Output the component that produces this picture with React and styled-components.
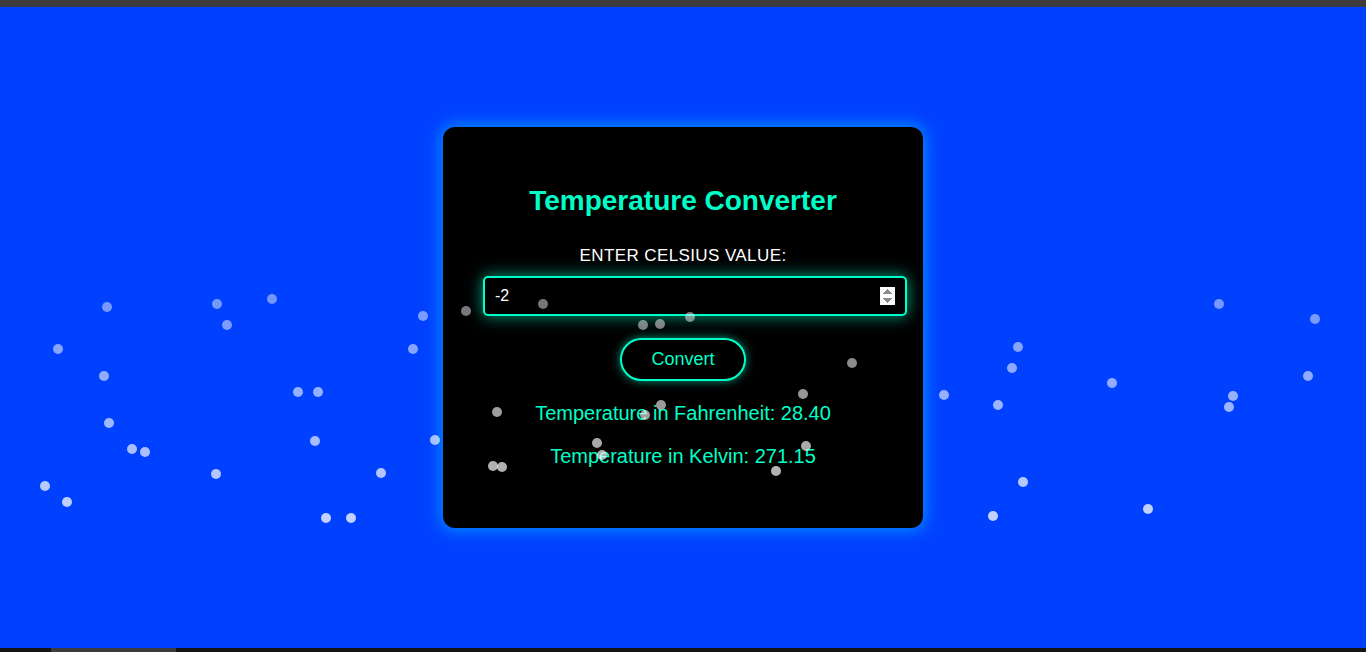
import React, { useState } from "react";
import styled, { createGlobalStyle } from "styled-components";

const GlobalStyle = createGlobalStyle`
  html, body, #root {
    height: 100%;
  }
  body {
    margin: 0;
    overflow: hidden;
    font-family: "Liberation Sans", Arial, sans-serif;
  }
  * { box-sizing: content-box; }
`;

const TEAL = "#00ffc8";

// particle centres, page coordinates
const dots = [
  [107, 307], [217, 304], [272, 299], [227, 325], [58, 349], [104, 376],
  [109, 423], [132, 449], [145, 452], [216, 474], [45, 486], [67, 502],
  [298, 392], [318, 392], [315, 441], [381, 473], [326, 518], [351, 518],
  [423, 316], [413, 349], [435, 440], [466, 311],
  [543, 304], [643, 325], [660, 324], [690, 317], [852, 363], [803, 394],
  [497, 412], [661, 405], [645, 415], [597, 443], [602, 455], [493, 466],
  [502, 467], [776, 471], [806, 446],
  [944, 395], [1018, 347], [1012, 368], [998, 405], [1023, 482], [993, 516],
  [1112, 383], [1148, 509], [1219, 304], [1233, 396], [1229, 407],
  [1315, 319], [1308, 376],
];

function Converter() {
  const [celsius, setCelsius] = useState("-2");
  const [result, setResult] = useState({ f: "28.40", k: "271.15" });

  const convert = () => {
    const c = parseFloat(celsius);
    if (isNaN(c)) return;
    setResult({ f: (c * 9 / 5 + 32).toFixed(2), k: (c + 273.15).toFixed(2) });
  };

  return (
    <Page>
      <GlobalStyle />
      <TopBar />
      <Stage>
        <Card>
          <Title>Temperature Converter</Title>
          <Label htmlFor="celsius">Enter Celsius Value:</Label>
          <Input
            id="celsius"
            type="number"
            value={celsius}
            onChange={(e) => setCelsius(e.target.value)}
          />
          <Button onClick={convert}>Convert</Button>
          <Result>Temperature in Fahrenheit: {result.f}</Result>
          <Result>Temperature in Kelvin: {result.k}</Result>
        </Card>
        <Particles>
          {dots.map(([x, y], i) => (
            <Dot
              key={i}
              style={{
                left: x - 5,
                top: y - 7 - 5,
                opacity: Math.min(0.78, 0.45 + (y - 295) * 0.0014),
              }}
            />
          ))}
        </Particles>
      </Stage>
      <BottomBar>
        <Thumb />
      </BottomBar>
    </Page>
  );
}

const Page = styled.div`
  height: 100vh;
  display: flex;
  flex-direction: column;
`;

const TopBar = styled.div`
  height: 7px;
  background: #3c3c3c;
`;

const Stage = styled.main`
  position: relative;
  flex: 1;
  background: #0041ff;
  display: flex;
  align-items: center;
  justify-content: center;
  overflow: hidden;
`;

const BottomBar = styled.div`
  height: 4px;
  background: #141414;
  padding-left: 51px;
`;

const Thumb = styled.div`
  width: 125px;
  height: 100%;
  background: #3c3c3c;
`;

const Card = styled.div`
  width: 400px;
  padding: 40px;
  background: #000;
  border-radius: 12px;
  box-shadow: 0 0 16px 2px rgba(0, 160, 255, 0.85);
  text-align: center;
`;

const Title = styled.h1`
  margin: 18px 0 29px;
  font-size: 28px;
  font-weight: 700;
  color: ${TEAL};
`;

const Label = styled.label`
  display: block;
  margin-bottom: 10px;
  font-size: 17px;
  color: #fff;
  text-transform: uppercase;
  letter-spacing: 0.4px;
`;

const Input = styled.input`
  display: block;
  width: 100%;
  padding: 9px 10px;
  font-family: "Liberation Sans", Arial, sans-serif;
  font-size: 16px;
  color: #fff;
  background: #000;
  border: 2px solid ${TEAL};
  border-radius: 5px;
  outline: none;
  box-shadow: 0 0 16px rgba(0, 255, 200, 0.65);

  &::-webkit-inner-spin-button {
    opacity: 1;
  }
`;

const Button = styled.button`
  margin: 22px 0 1px;
  padding: 9px 29px;
  font-family: "Liberation Sans", Arial, sans-serif;
  font-size: 18px;
  color: ${TEAL};
  background: #000;
  border: 2px solid ${TEAL};
  border-radius: 22px;
  box-shadow: 0 0 10px rgba(0, 255, 200, 0.6);
  cursor: pointer;
`;

const Result = styled.p`
  margin: 20px 0;
  font-size: 20px;
  color: ${TEAL};
`;

const Particles = styled.div`
  position: absolute;
  inset: 0;
  pointer-events: none;
`;

const Dot = styled.span`
  position: absolute;
  width: 10px;
  height: 10px;
  border-radius: 50%;
  background: #fff;
`;

export default function App() {
  return <Converter />;
}
